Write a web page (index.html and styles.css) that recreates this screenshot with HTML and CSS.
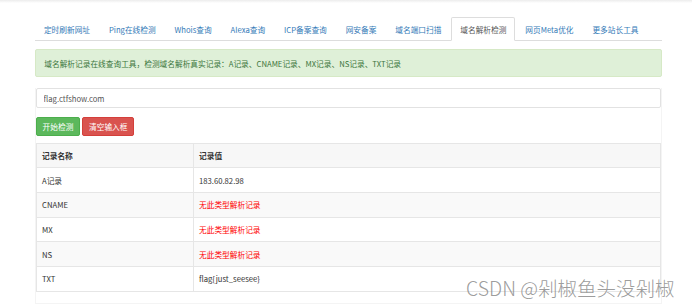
FILE: index.html
```html
<!DOCTYPE html>
<html lang="zh-CN">
<head>
    <meta charset="UTF-8">
    <meta name="viewport" content="width=device-width, initial-scale=1.0">
    <title>域名解析检测</title>
    <link rel="stylesheet" href="styles.css">
</head>
<body>
    <div class="topbar"></div>
    <div class="container">
        <ul class="nav-tabs">
            <li><a href="#">定时刷新网址</a></li>
            <li><a href="#">Ping在线检测</a></li>
            <li><a href="#">Whois查询</a></li>
            <li><a href="#">Alexa查询</a></li>
            <li><a href="#">ICP备案查询</a></li>
            <li><a href="#">网安备案</a></li>
            <li><a href="#">域名端口扫描</a></li>
            <li class="active"><a href="#">域名解析检测</a></li>
            <li><a href="#">网页Meta优化</a></li>
            <li><a href="#">更多站长工具</a></li>
        </ul>

        <div class="alert">域名解析记录在线查询工具，检测域名解析真实记录：A记录、CNAME记录、MX记录、NS记录、TXT记录</div>

        <div class="panel">
            <input type="text" class="form-control" value="flag.ctfshow.com">
            <div class="actions">
                <button type="button" class="btn btn-success">开始检测</button>
                <button type="button" class="btn btn-danger">清空输入框</button>
            </div>
            <table class="table">
                <thead>
                    <tr><th class="col-name">记录名称</th><th>记录值</th></tr>
                </thead>
                <tbody>
                    <tr><td>A记录</td><td>183.60.82.98</td></tr>
                    <tr><td>CNAME</td><td class="none">无此类型解析记录</td></tr>
                    <tr><td>MX</td><td class="none">无此类型解析记录</td></tr>
                    <tr><td>NS</td><td class="none">无此类型解析记录</td></tr>
                    <tr><td>TXT</td><td>flag{just_seesee}</td></tr>
                </tbody>
            </table>
        </div>
    </div>
    <div class="watermark">CSDN @剁椒鱼头没剁椒</div>
</body>
</html>
```

FILE: styles.css
```css
body {
    font-family: "Noto Sans CJK SC", sans-serif;
    font-size: 7.7px;
    line-height: 11px;
    color: #333;
    margin: 0;
    background-color: #fff;
    position: relative;
    height: 308px;
    overflow: hidden;
}
.topbar {
    height: 3px;
    background: linear-gradient(#ececec, #fff);
}
.container {
    width: 627px;
    margin-left: 35px;
    padding-top: 14px;
}
.nav-tabs {
    display: flex;
    list-style: none;
    margin: 0;
    padding: 0;
    border-bottom: 1px solid #ddd;
}
.nav-tabs li {
    margin-bottom: -1px;
    margin-right: 1.1px;
}
.nav-tabs a {
    display: block;
    padding: 5.5px 7.9px;
    border: 1px solid transparent;
    border-radius: 2px 2px 0 0;
    color: #337ab7;
    text-decoration: none;
}
.nav-tabs .active a {
    color: #555;
    background-color: #fff;
    border-color: #ddd #ddd transparent;
}
.alert {
    margin: 8px 0 11px;
    padding: 7.5px 8.25px;
    background-color: #dff0d8;
    border: 1px solid #d6e9c6;
    border-radius: 2px;
    color: #3c763d;
}
.panel {
    border: 1px solid #f4f4f4;
    border-top: none;
    padding-bottom: 11px;
}
.form-control {
    display: block;
    box-sizing: border-box;
    width: 100%;
    height: 20px;
    margin: 0;
    padding: 0 6.6px;
    font-family: inherit;
    font-size: 7.7px;
    color: #555;
    border: 1px solid #e2e2e2;
    border-radius: 2px;
    outline: none;
}
.actions {
    display: flex;
    gap: 2.5px;
    margin: 9px 0 7px;
}
.btn {
    height: 18.5px;
    padding: 0 5.6px;
    font-family: inherit;
    font-size: 7.7px;
    color: #fff;
    border: 1px solid transparent;
    border-radius: 2px;
}
.btn-success {
    background-color: #5cb85c;
    border-color: #4cae4c;
}
.btn-danger {
    background-color: #d9534f;
    border-color: #d43f3a;
}
.table {
    width: 100%;
    border-collapse: collapse;
}
.table th, .table td {
    height: 24.7px;
    box-sizing: border-box;
    padding: 0 5px;
    text-align: left;
    border: 1px solid #e6e6e6;
}
.table th {
    font-weight: bold;
    background-color: #f7f7f7;
}
.table .col-name {
    width: 157px;
}
.table tbody tr:nth-child(even) {
    background-color: #f9f9f9;
}
.none {
    color: #f00;
}
.watermark {
    position: absolute;
    left: 466px;
    top: 276px;
    font-family: "Noto Sans CJK SC", sans-serif;
    font-size: 19.5px;
    font-weight: 300;
    line-height: 24px;
    color: rgba(130, 130, 130, 0.8);
    white-space: nowrap;
}
```
